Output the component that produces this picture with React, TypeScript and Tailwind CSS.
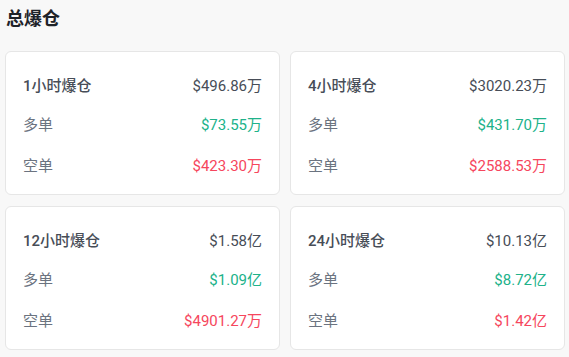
const CARDS = [
  { title: "1小时爆仓", total: "$496.86万", long: "$73.55万", short: "$423.30万" },
  { title: "4小时爆仓", total: "$3020.23万", long: "$431.70万", short: "$2588.53万" },
  { title: "12小时爆仓", total: "$1.58亿", long: "$1.09亿", short: "$4901.27万" },
  { title: "24小时爆仓", total: "$10.13亿", long: "$8.72亿", short: "$1.42亿" },
];

function Card({ title, total, long, short }: (typeof CARDS)[number]) {
  return (
    <div className="flex h-[144px] flex-col rounded-md border border-[#e6e6e6] bg-white px-[17px] pt-[15px] pb-[8px]">
      <div className="flex h-10 items-center justify-between">
        <span className="font-medium text-[#474d57]">{title}</span>
        <span className="text-[#474d57]">{total}</span>
      </div>
      <div className="flex h-10 items-center justify-between">
        <span className="text-[#6b7380]">多单</span>
        <span className="text-[#20b28a]">{long}</span>
      </div>
      <div className="mt-[2px] flex h-10 items-center justify-between">
        <span className="text-[#6b7380]">空单</span>
        <span className="text-[#f6465d]">{short}</span>
      </div>
    </div>
  );
}

export default function App() {
  return (
    <div
      className="min-h-screen bg-[#f8f8f8] pl-[5px] pr-[4px] pt-[6px] text-[15px]"
      style={{ fontFamily: 'Roboto, "Noto Sans CJK SC", sans-serif' }}
    >
      <h1 className="pl-[1px] text-[18px] font-bold leading-[26px] text-[#1e2329]">总爆仓</h1>
      <div className="mt-[19px] grid grid-cols-2 gap-x-[10px] gap-y-[11px]">
        {CARDS.map((c) => (
          <Card key={c.title} {...c} />
        ))}
      </div>
    </div>
  );
}
